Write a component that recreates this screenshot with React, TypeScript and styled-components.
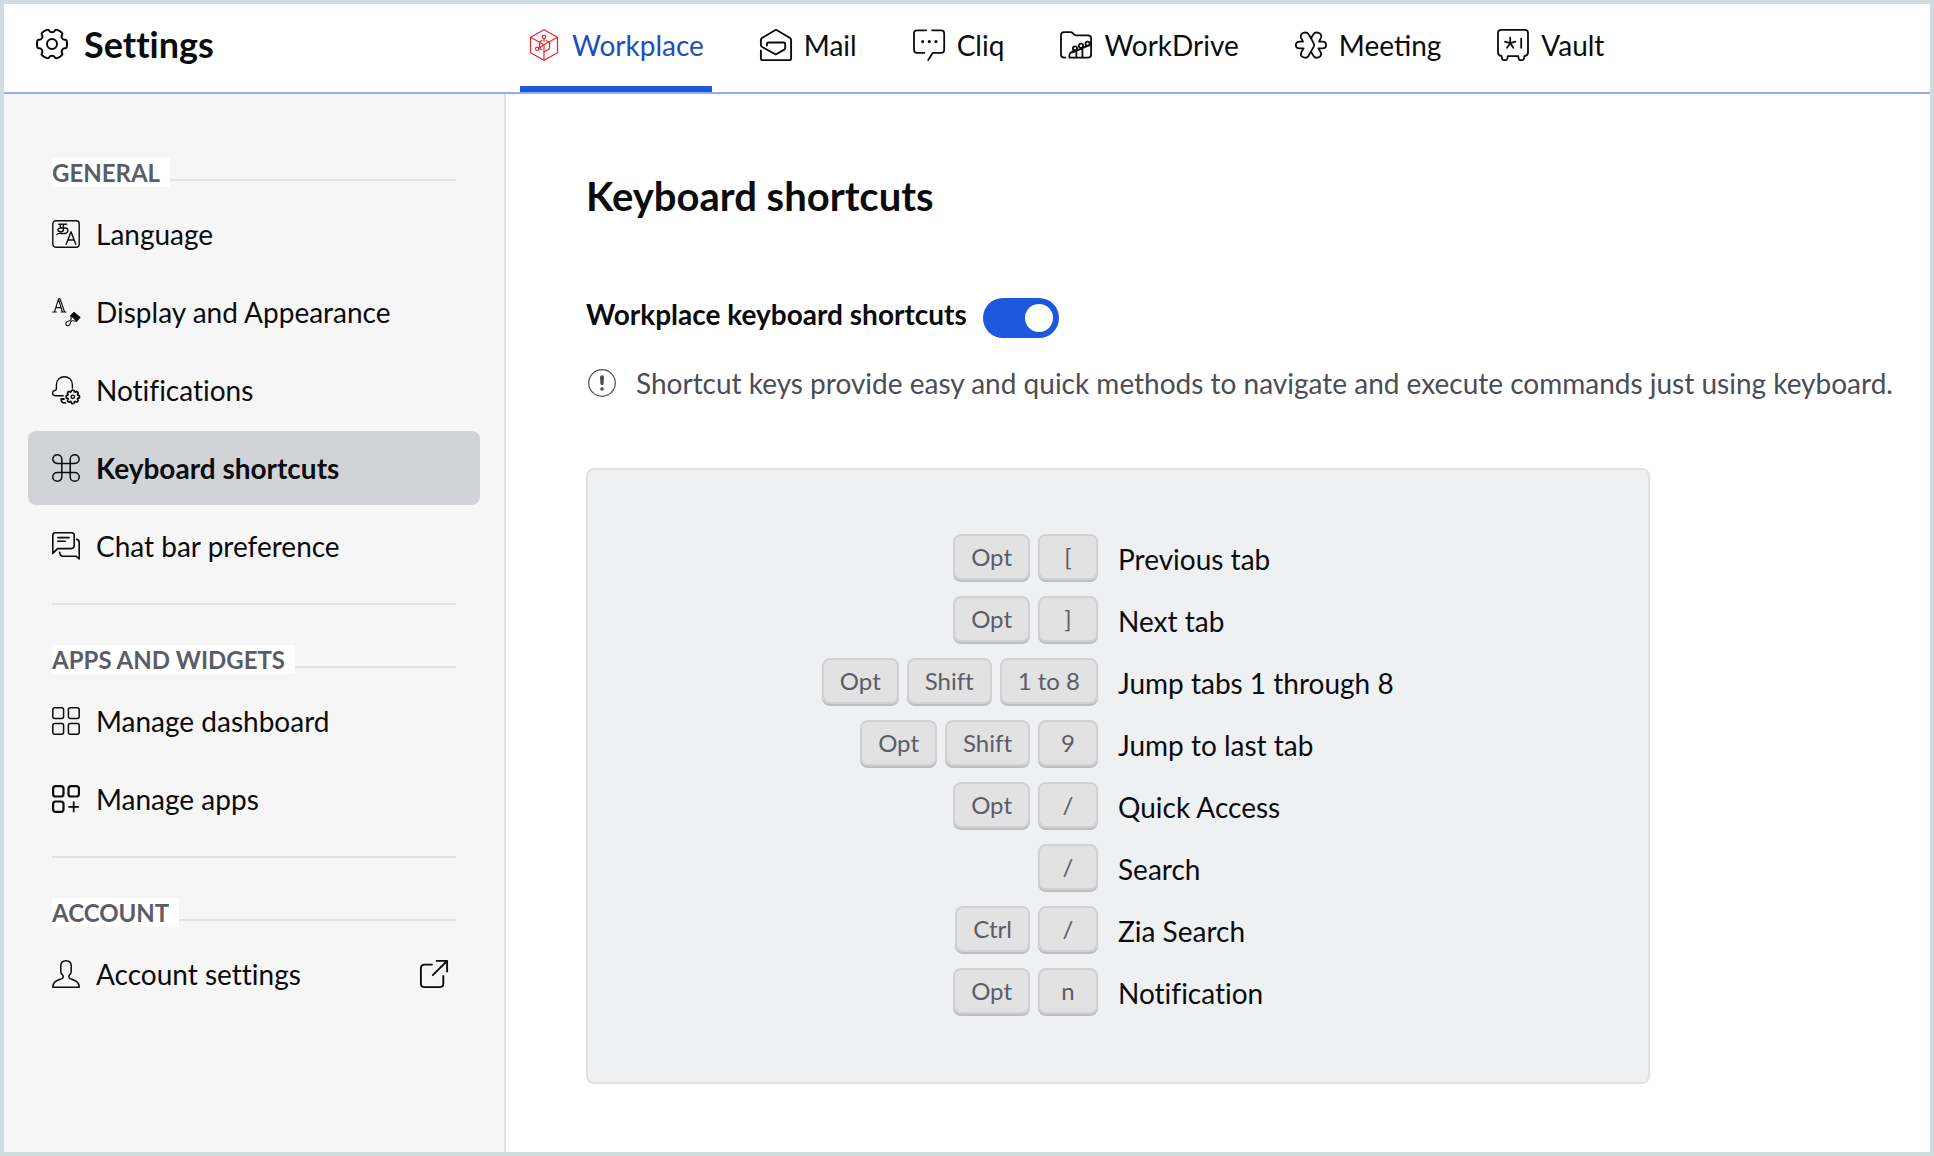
import React, { useState } from "react";
import styled, { createGlobalStyle } from "styled-components";

const GlobalStyle = createGlobalStyle`
  *, *::before, *::after { box-sizing: border-box; }
  body {
    margin: 0;
    background: #fff;
    color: #0b0c0e;
    font-family: Lato, "Open Sans", sans-serif;
    font-size: 28px;
    line-height: 34px;
    font-variant-ligatures: none;
  }
`;

/* ---------- Icons ---------- */

const Icon = styled.svg<{ $size: number; $stroke?: number }>`
  flex: none;
  display: block;
  width: ${(p) => p.$size}px;
  height: ${(p) => p.$size}px;
  fill: none;
  stroke: currentColor;
  stroke-width: ${(p) => p.$stroke ?? 1.6};
  stroke-linecap: round;
  stroke-linejoin: round;
  overflow: visible;
`;

/* Closed outline of a cog with softened corners. */
function gearPath(cx: number, cy: number, outer: number, inner: number, teeth: number, half: number) {
  const pts: number[][] = [];
  const step = (Math.PI * 2) / teeth;
  for (let i = 0; i < teeth; i++) {
    const a = i * step;
    [
      [inner, -half * 1.35],
      [outer, -half],
      [outer, half],
      [inner, half * 1.35],
    ].forEach(([r, d]) => pts.push([cx + r * Math.cos(a + d), cy + r * Math.sin(a + d)]));
  }
  const at = (i: number) => pts[(i + pts.length) % pts.length];
  const mix = (a: number[], b: number[], t: number) =>
    `${(a[0] + (b[0] - a[0]) * t).toFixed(2)} ${(a[1] + (b[1] - a[1]) * t).toFixed(2)}`;
  return (
    pts
      .map((p, i) => `${i ? "L" : "M"}${mix(p, at(i - 1), 0.45)}Q${p[0].toFixed(2)} ${p[1].toFixed(2)} ${mix(p, at(i + 1), 0.45)}`)
      .join("") + "Z"
  );
}

const GearIcon = () => (
  <Icon $size={32} $stroke={2} viewBox="0 0 32 32" aria-hidden="true">
    <path d={gearPath(16, 16, 15.6, 11.8, 6, 0.27)} />
    <circle cx="16" cy="16" r="5" />
  </Icon>
);

const CubeIcon = () => (
  <Icon $size={32} $stroke={1.2} viewBox="0 0 32 32" color="#e8262a" aria-hidden="true">
    <path d="M16 .7 29.5 8.3V23.7L16 31.3 2.5 23.7V8.3Z" />
    <path d="M2.5 8.3 16 15.8 29.5 8.3M16 15.8V31.3" />
    <circle cx="16" cy="7.8" r="1.7" />
    <circle cx="9.2" cy="19.8" r="1.7" />
    <path d="M16 9.5V12.6M13.8 11.6 11.6 12.8V19.6M16 15.8 12 18.4M10.9 19.2 13.6 20.6M18.4 11.6 21.6 13.4V18.6Q21.6 20 20.3 20.6L16 22.8" />
  </Icon>
);

const MailIcon = () => (
  <Icon $size={32} $stroke={1.9} viewBox="0 0 32 32" aria-hidden="true">
    <path d="M.9 21.4V29.2Q.9 31.1 2.8 31.1H29.2Q31.1 31.1 31.1 29.2V11Q31.1 9.8 30 9L17 1.3Q16 .7 15 1.3L2 9Q.9 9.8 .9 11V15.8Q.9 17.2 2.2 18L15.8 25.5 24.2 20.6Q25.2 20 25.2 18.8V15Q25.2 13.5 23.7 13.5H8.6Q6.9 13.5 6.9 15V16.6" />
  </Icon>
);

const CliqIcon = () => (
  <Icon $size={32} $stroke={1.8} viewBox="0 0 32 32" aria-hidden="true">
    <path d="M13.2 1.3H4Q1 1.3 1 4.3V20.7Q1 23.8 4 23.8H11.4M19 1.3H28.2Q31.2 1.3 31.2 4.3V20.7Q31.2 23.8 28.2 23.8H19.8L15.2 31" />
    <g fill="currentColor" stroke="none">
      <circle cx="9.7" cy="12.6" r="1.6" />
      <circle cx="16.3" cy="12.6" r="1.6" />
      <circle cx="23" cy="12.6" r="1.6" />
    </g>
  </Icon>
);

const DriveIcon = () => (
  <Icon $size={32} $stroke={1.8} viewBox="0 0 32 32" aria-hidden="true">
    <path d="M5.4 28.6H4Q1 28.6 1 25.6V6.2Q1 3.2 4 3.2H10.4Q11.8 3.2 12.8 4.2L14.2 5.6Q15 6.3 16.2 6.3H28Q31.1 6.3 31.1 9.3V25.6Q31.1 28.7 28 28.7H9.4V26Q9.6 24.4 11 23.4L15 20.9" />
    <path d="M12.6 23.4 31 15.4M16.4 28.4V22M22.4 28.4V19.4" />
    <circle cx="15" cy="19.4" r="2.1" />
    <circle cx="21" cy="16.8" r="2.1" />
    <circle cx="27.6" cy="14.8" r="2.1" />
  </Icon>
);

const MeetingIcon = () => (
  <Icon $size={32} $stroke={1.8} viewBox="0 0 32 32" aria-hidden="true">
    <path d="M16 9.2 13.4 5.1C11.4 2 4.6 3.8 5.9 8.6L8 12.6H4.6C-.4 12.6 -.4 19.4 4.6 19.4H8.6L6.2 23.4C4.4 28.2 11.2 30.4 13.4 27L18.8 17.6Q19.5 16 18.8 14.6Z" />
    <path d="M16 9.2 18.6 5.1C20.6 2 27.4 3.8 26.1 8.6L24 12.6H27.4C32.4 12.6 32.4 19.4 27.4 19.4H23.4L25.8 23.4C27.6 28.2 20.8 30.4 18.6 27L16 22.6" />
  </Icon>
);

const VaultIcon = () => (
  <Icon $size={32} $stroke={1.8} viewBox="0 0 32 32" aria-hidden="true">
    <path d="M4.6 27.2Q1 26.6 1 23.6V4.2Q1 .9 4.2 .9H27.8Q31 .9 31 4.2V23.6Q31 26.6 27.4 27.2L26.9 29.8Q26.6 31.2 25.2 31.2H23.4Q22 31.2 21.7 29.8L21.2 27.2H10.8L10.3 29.8Q10 31.2 8.6 31.2H6.8Q5.4 31.2 5.1 29.8Z" />
    <path d="M13.2 8.6V14.2M13.2 14.2 18.4 12.6M13.2 14.2 8 12.6M13.2 14.2 16.4 18.8M13.2 14.2 10 18.8M24.2 9.6V18.8" />
  </Icon>
);

const LanguageIcon = () => (
  <Icon $size={28} $stroke={1.4} viewBox="0 0 28 28" aria-hidden="true">
    <rect x=".8" y=".8" width="26.4" height="26.4" rx="3" />
    <path d="M14.2 24.2 19 11.8 23.8 24.2M15.8 20H22.2" />
    <path d="M6.8 4.2H14.6M8.4 4.2V8H13.2M11.4 4.2V10.4Q10.6 12.2 8.4 11.8 5.6 11.4 6 9.4 6.8 7.6 9.6 8M13.2 8Q16 8 15.8 10.8 15.4 13.8 10.4 13.6 5.4 12.8 4.8 14.6" />
  </Icon>
);

const AppearanceIcon = () => (
  <Icon $size={28} $stroke={1.1} viewBox="0 0 28 28" aria-hidden="true">
    <path d="M.6 14H4.4M2.4 14 6.6 .8H8L12.6 14M6.6 1.6 10.4 14M9 14H14M4 9.6H9" />
    <path d="M22 14.4 28 19.4 24.6 23.2Q22 20 18.8 17.6Z" fill="currentColor" />
    <path d="M18.8 17.6 19.2 20.6Q19.4 22.2 17.6 22.8 13.8 23.8 13.8 25.8 14.2 28 16.4 27.6 18.2 27.2 18.6 24.4 19.2 22.4 21 22.8L24.6 23.2" />
  </Icon>
);

const NotificationsIcon = () => (
  <Icon $size={28} $stroke={1.4} viewBox="0 0 28 28" aria-hidden="true">
    <path d="M20.4 12V9C20.4 -2 4.4 -2 4.4 9V12.6Q4.4 14.6 2.2 14.8 .6 15.2 .6 17.2 .8 19.7 3.4 19.7H11.2" />
    <path d="M12 23H9.2Q9.2 27.2 13.4 26.8" strokeWidth="1.8" />
    <path d={gearPath(20.8, 20.8, 6.9, 5.2, 8, 0.2)} strokeWidth="1.7" />
    <circle cx="20.8" cy="20.8" r="1.7" />
  </Icon>
);

const CommandIcon = () => (
  <Icon $size={28} $stroke={1.5} viewBox="0 0 28 28" aria-hidden="true">
    <path d="M9.8 9.4H18.2V18.6H9.8Z" />
    <path d="M9.8 9.4V5.1A4.5 4.3 0 1 0 5.3 9.4H9.8M18.2 9.4V5.1A4.5 4.3 0 1 1 22.7 9.4H18.2M9.8 18.6V22.9A4.5 4.3 0 1 1 5.3 18.6H9.8M18.2 18.6V22.9A4.5 4.3 0 1 0 22.7 18.6H18.2" />
  </Icon>
);

const ChatIcon = () => (
  <Icon $size={28} $stroke={1.6} viewBox="0 0 28 28" aria-hidden="true">
    <path d="M.8 21.4V3.4Q.8 .8 3.4 .8H19.6Q22.2 .8 22.2 3.4V13.6Q22.2 16.6 19.2 16.6H5.6Z" />
    <path d="M5.8 5.6H17M5.8 9.2H13.2M24.6 7.4Q27.2 8 27.2 10.4V27L24 24.2H10.8Q8 24.2 7.6 20.2" />
  </Icon>
);

const DashboardIcon = () => (
  <Icon $size={28} $stroke={1.5} viewBox="0 0 28 28" aria-hidden="true">
    <rect x=".8" y=".8" width="10.8" height="10.8" rx="2" />
    <rect x="16.4" y=".8" width="10.8" height="10.8" rx="2" />
    <rect x=".8" y="16.4" width="10.8" height="10.8" rx="2" />
    <rect x="16.4" y="16.4" width="10.8" height="10.8" rx="2" />
  </Icon>
);

const AppsIcon = () => (
  <Icon $size={28} $stroke={2.2} viewBox="0 0 28 28" aria-hidden="true">
    <rect x="1.1" y="1.1" width="10.4" height="10.4" rx="2.6" />
    <rect x="16.5" y="1.1" width="10.4" height="10.4" rx="2.6" />
    <rect x="1.1" y="16.5" width="10.4" height="10.4" rx="2.6" />
    <path d="M21.7 17.2V26.4M17.1 21.8H26.3" strokeWidth="1.8" />
  </Icon>
);

const AccountIcon = () => (
  <Icon $size={28} $stroke={1.5} viewBox="0 0 28 28" aria-hidden="true">
    <path d="M14 .7C10.6 .7 8.8 2.6 8.8 6V11.4Q8.8 13.4 10.4 14.8 12.4 17.2 10 18.6C6.6 20 .8 20.8 .8 27.2H27.2C27.2 20.8 21.4 20 18 18.6 15.6 17.2 17.6 14.8 17.6 14.8 19.2 13.4 19.2 13.4 19.2 11.4V6C19.2 2.6 17.4 .7 14 .7Z" />
  </Icon>
);

const ExternalIcon = () => (
  <Icon $size={28} $stroke={1.9} viewBox="0 0 28 28" aria-hidden="true">
    <path d="M12 4.6H4.6Q.9 4.6 .9 8.2V23.4Q.9 27.1 4.6 27.1H19.6Q23.3 27.1 23.3 23.4V16M16.6 .9H27.1V11.4M27 1 12.8 15.2" />
  </Icon>
);

const InfoIcon = () => (
  <Icon $size={28} $stroke={1.2} viewBox="0 0 28 28" aria-hidden="true">
    <circle cx="14" cy="14" r="13.3" />
    <g fill="currentColor" stroke="none">
      <path d="M12 8.2a2 2 0 0 1 4 0L15.6 14.6a1.6 1.6 0 0 1-3.2 0Z" />
      <circle cx="14" cy="20" r="1.8" />
    </g>
  </Icon>
);

/* ---------- Layout ---------- */

const Page = styled.div`
  min-height: 100vh;
  display: flex;
  flex-direction: column;
  border: 4px solid #d0dbe0;
`;

const Header = styled.header`
  display: flex;
  height: 90px;
  border-bottom: 2px solid #8fb0f5;
`;

const Brand = styled.div`
  flex: none;
  width: 516px;
  display: flex;
  align-items: center;
  gap: 16px;
  padding: 0 32px 8px;
`;

const BrandName = styled.span`
  font-size: 36px;
  line-height: 44px;
  font-weight: 700;
`;

const Tabs = styled.nav`
  display: flex;
  gap: 40px;
  font-variant-ligatures: normal;
`;

const Tab = styled.a<{ $active?: boolean }>`
  display: flex;
  align-items: center;
  gap: 12px;
  padding: 0 8px;
  border-bottom: 6px solid ${(p) => (p.$active ? "#1d57dc" : "transparent")};
  color: ${(p) => (p.$active ? "#1a4fc0" : "inherit")};
  text-decoration: none;
  white-space: nowrap;
`;

const Body = styled.div`
  flex: 1;
  display: flex;
`;

const Sidebar = styled.nav`
  flex: none;
  width: 502px;
  padding: 64px 24px 32px;
  background: #f6f6f6;
  border-right: 2px solid #e2e2e2;
`;

const Group = styled.section`
  & + & {
    margin-top: 20px;
  }
  & + &::before {
    content: "";
    display: block;
    height: 2px;
    margin: 0 24px 40px;
    background: #e2e2e2;
  }
`;

const GroupTitle = styled.h2`
  display: flex;
  align-items: flex-end;
  margin: 0 24px 10px;
  color: #5a5d66;
  font-size: 24px;
  line-height: 29px;
  font-weight: 700;
  white-space: nowrap;

  span {
    padding-right: 10px;
    background: #fff;
  }
  &::after {
    content: "";
    flex: 1;
    height: 2px;
    margin-bottom: 6px;
    background: #e2e2e2;
  }
`;

const ItemList = styled.ul`
  display: flex;
  flex-direction: column;
  gap: 4px;
  margin: 0;
  padding: 0;
  list-style: none;
`;

const Item = styled.a<{ $active?: boolean }>`
  display: flex;
  align-items: center;
  gap: 16px;
  padding: 20px 32px 20px 24px;
  border-radius: 8px;
  background: ${(p) => (p.$active ? "#d2d3d7" : "transparent")};
  font-weight: ${(p) => (p.$active ? 700 : 400)};
  color: inherit;
  text-decoration: none;
`;

const ItemText = styled.span`
  flex: 1;
`;

const Main = styled.main`
  flex: 1;
  min-width: 0;
  padding: 78px 32px 64px 80px;
`;

const Title = styled.h1`
  margin: 0 0 78px;
  font-size: 40px;
  line-height: 48px;
  font-weight: 700;
`;

const ToggleRow = styled.div`
  display: flex;
  align-items: flex-start;
  gap: 16px;
  line-height: 32px;
  font-weight: 700;
`;

const Switch = styled.input`
  appearance: none;
  flex: none;
  display: flex;
  align-items: center;
  width: 76px;
  height: 40px;
  margin: 0;
  padding: 0 6px;
  border-radius: 20px;
  background: #a9abb3;
  cursor: pointer;

  &::before {
    content: "";
    width: 28px;
    height: 28px;
    border-radius: 50%;
    background: #fff;
  }
  &:checked {
    justify-content: flex-end;
    background: #1d57dc;
  }
`;

const Hint = styled.p`
  display: flex;
  align-items: center;
  gap: 20px;
  margin: 28px 0 68px;
  padding-left: 2px;
  color: #4b4d55;
`;

const Panel = styled.section`
  max-width: 1064px;
  padding: 64px 0 52px;
  border: 2px solid #e0e1e3;
  border-radius: 8px;
  background: #eff0f2;
`;

const ShortcutTable = styled.table`
  width: 100%;
  table-layout: fixed;
  border-collapse: collapse;

  td, th {
    height: 62px;
    padding: 0;
    vertical-align: top;
    text-align: left;
    font-weight: 400;
    line-height: 50px;
  }
`;

const Keys = styled.div`
  display: flex;
  justify-content: flex-end;
  gap: 8px;
  padding-right: 20px;
`;

const Key = styled.kbd`
  display: flex;
  justify-content: center;
  align-items: center;
  min-width: 60px;
  height: 46px;
  padding: 0 16px;
  border: 2px solid #d0d1d5;
  border-radius: 8px;
  box-shadow: 0 2px 0 #bdbec2;
  background: #e2e2e3;
  color: #5a5d66;
  font-family: inherit;
  font-size: 24px;
  line-height: 30px;
`;

/* ---------- Data ---------- */

const tabs = [
  { name: "Workplace", icon: <CubeIcon /> },
  { name: "Mail", icon: <MailIcon /> },
  { name: "Cliq", icon: <CliqIcon /> },
  { name: "WorkDrive", icon: <DriveIcon /> },
  { name: "Meeting", icon: <MeetingIcon /> },
  { name: "Vault", icon: <VaultIcon /> },
];

const groups: { title: string; items: { name: string; icon: React.ReactNode; external?: boolean }[] }[] = [
  {
    title: "GENERAL",
    items: [
      { name: "Language", icon: <LanguageIcon /> },
      { name: "Display and Appearance", icon: <AppearanceIcon /> },
      { name: "Notifications", icon: <NotificationsIcon /> },
      { name: "Keyboard shortcuts", icon: <CommandIcon /> },
      { name: "Chat bar preference", icon: <ChatIcon /> },
    ],
  },
  {
    title: "APPS AND WIDGETS",
    items: [
      { name: "Manage dashboard", icon: <DashboardIcon /> },
      { name: "Manage apps", icon: <AppsIcon /> },
    ],
  },
  {
    title: "ACCOUNT",
    items: [{ name: "Account settings", icon: <AccountIcon />, external: true }],
  },
];

const shortcuts = [
  { keys: ["Opt", "["], action: "Previous tab" },
  { keys: ["Opt", "]"], action: "Next tab" },
  { keys: ["Opt", "Shift", "1 to 8"], action: "Jump tabs 1 through 8" },
  { keys: ["Opt", "Shift", "9"], action: "Jump to last tab" },
  { keys: ["Opt", "/"], action: "Quick Access" },
  { keys: ["/"], action: "Search" },
  { keys: ["Ctrl", "/"], action: "Zia Search" },
  { keys: ["Opt", "n"], action: "Notification" },
];

export default function App() {
  const [enabled, setEnabled] = useState(true);

  return (
    <Page>
      <GlobalStyle />
      <Header>
        <Brand>
          <GearIcon />
          <BrandName>Settings</BrandName>
        </Brand>
        <Tabs aria-label="Applications">
          {tabs.map((tab, i) => (
            <Tab key={tab.name} href="#" $active={i === 0}>
              {tab.icon}
              {tab.name}
            </Tab>
          ))}
        </Tabs>
      </Header>
      <Body>
        <Sidebar aria-label="Settings">
          {groups.map((group) => (
            <Group key={group.title}>
              <GroupTitle>
                <span>{group.title}</span>
              </GroupTitle>
              <ItemList>
                {group.items.map((item) => (
                  <li key={item.name}>
                    <Item href="#" $active={item.name === "Keyboard shortcuts"}>
                      {item.icon}
                      <ItemText>{item.name}</ItemText>
                      {item.external && <ExternalIcon />}
                    </Item>
                  </li>
                ))}
              </ItemList>
            </Group>
          ))}
        </Sidebar>
        <Main>
          <Title>Keyboard shortcuts</Title>
          <ToggleRow>
            <label htmlFor="workplace-shortcuts">Workplace keyboard shortcuts</label>
            <Switch
              id="workplace-shortcuts"
              type="checkbox"
              checked={enabled}
              onChange={(e) => setEnabled(e.target.checked)}
            />
          </ToggleRow>
          <Hint>
            <InfoIcon />
            Shortcut keys provide easy and quick methods to navigate and execute commands just using keyboard.
          </Hint>
          <Panel>
            <ShortcutTable>
              <tbody>
                {shortcuts.map((s) => (
                  <tr key={s.action}>
                    <td>
                      <Keys>
                        {s.keys.map((k) => (
                          <Key key={k}>{k}</Key>
                        ))}
                      </Keys>
                    </td>
                    <th scope="row">{s.action}</th>
                  </tr>
                ))}
              </tbody>
            </ShortcutTable>
          </Panel>
        </Main>
      </Body>
    </Page>
  );
}
